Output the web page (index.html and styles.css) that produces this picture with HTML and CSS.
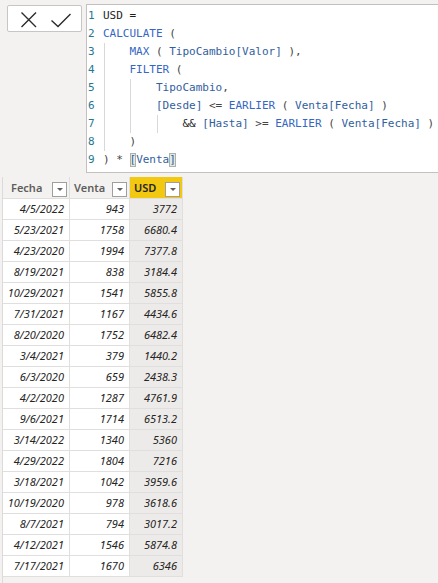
FILE: index.html
```html
<!DOCTYPE html>
<html lang="es">
<head>
<meta charset="utf-8">
<title>USD</title>
<link rel="stylesheet" href="styles.css">
</head>
<body>
<div class="top">
  <div class="actions">
    <svg class="icon" width="20" height="20" viewBox="0 0 20 20"><path d="M3.5 3.5 L18 18 M18 3.5 L3.5 18" stroke="#2b2b2b" stroke-width="1.4" fill="none"/></svg>
    <svg class="icon" width="22" height="20" viewBox="0 0 22 20"><path d="M1.5 11.5 L8 17.5 L20.5 5" stroke="#2b2b2b" stroke-width="1.4" fill="none"/></svg>
  </div>
  <div class="editor">
    <div class="line"><span class="ln">1</span><span class="tx">USD =</span></div>
    <div class="line"><span class="ln">2</span><span class="kw">CALCULATE</span><span class="op"> (</span></div>
    <div class="line"><span class="ln">3</span><span class="ind"></span><span class="kw">MAX</span><span class="op"> ( </span><span class="ref">TipoCambio[Valor]</span><span class="op"> ),</span></div>
    <div class="line"><span class="ln">4</span><span class="ind"></span><span class="kw">FILTER</span><span class="op"> (</span></div>
    <div class="line"><span class="ln">5</span><span class="ind"></span><span class="ind"></span><span class="ref">TipoCambio</span><span class="op">,</span></div>
    <div class="line"><span class="ln">6</span><span class="ind"></span><span class="ind"></span><span class="ref">[Desde]</span><span class="op"> &lt;= </span><span class="kw">EARLIER</span><span class="op"> ( </span><span class="ref">Venta[Fecha]</span><span class="op"> )</span></div>
    <div class="line"><span class="ln">7</span><span class="ind"></span><span class="ind"></span><span class="ind"></span><span class="tx">&amp;&amp; </span><span class="ref">[Hasta]</span><span class="op"> &gt;= </span><span class="kw">EARLIER</span><span class="op"> ( </span><span class="ref">Venta[Fecha]</span><span class="op"> )</span></div>
    <div class="line"><span class="ln">8</span><span class="ind"></span><span class="op">)</span></div>
    <div class="line"><span class="ln">9</span><span class="op">) * </span><span class="ref match">[</span><span class="ref">Venta</span><span class="ref match">]</span></div>
  </div>
</div>
<div class="panel">
  <div class="grid">
    <div class="hd c1"><span>Fecha</span><span class="dd"></span></div>
    <div class="hd c2"><span>Venta</span><span class="dd"></span></div>
    <div class="hd c3 sel"><span>USD</span><span class="dd"></span></div>

    <div class="cell">4/5/2022</div><div class="cell">943</div><div class="cell usd">3772</div>
    <div class="cell">5/23/2021</div><div class="cell">1758</div><div class="cell usd">6680.4</div>
    <div class="cell">4/23/2020</div><div class="cell">1994</div><div class="cell usd">7377.8</div>
    <div class="cell">8/19/2021</div><div class="cell">838</div><div class="cell usd">3184.4</div>
    <div class="cell">10/29/2021</div><div class="cell">1541</div><div class="cell usd">5855.8</div>
    <div class="cell">7/31/2021</div><div class="cell">1167</div><div class="cell usd">4434.6</div>
    <div class="cell">8/20/2020</div><div class="cell">1752</div><div class="cell usd">6482.4</div>
    <div class="cell">3/4/2021</div><div class="cell">379</div><div class="cell usd">1440.2</div>
    <div class="cell">6/3/2020</div><div class="cell">659</div><div class="cell usd">2438.3</div>
    <div class="cell">4/2/2020</div><div class="cell">1287</div><div class="cell usd">4761.9</div>
    <div class="cell">9/6/2021</div><div class="cell">1714</div><div class="cell usd">6513.2</div>
    <div class="cell">3/14/2022</div><div class="cell">1340</div><div class="cell usd">5360</div>
    <div class="cell">4/29/2022</div><div class="cell">1804</div><div class="cell usd">7216</div>
    <div class="cell">3/18/2021</div><div class="cell">1042</div><div class="cell usd">3959.6</div>
    <div class="cell">10/19/2020</div><div class="cell">978</div><div class="cell usd">3618.6</div>
    <div class="cell">8/7/2021</div><div class="cell">794</div><div class="cell usd">3017.2</div>
    <div class="cell">4/12/2021</div><div class="cell">1546</div><div class="cell usd">5874.8</div>
    <div class="cell">7/17/2021</div><div class="cell">1670</div><div class="cell usd">6346</div>
  </div>
</div>
</body>
</html>
```
FILE: styles.css
```css
html, body {
  margin: 0;
  padding: 0;
  background: #f3f2f1;
  width: 438px;
  height: 583px;
  overflow: hidden;
}
.top {
  display: flex;
  align-items: flex-start;
  padding-top: 4px;
}
.actions {
  margin-left: 7px;
  margin-top: 1px;
  width: 75px;
  height: 27px;
  box-sizing: border-box;
  background: #fff;
  border: 1px solid #c8c6c4;
  border-radius: 2px;
  display: flex;
  align-items: center;
  padding-left: 10px;
  gap: 12px;
}
.icon { display: block; flex: none; }
.editor {
  margin-left: 4px;
  flex: 1;
  height: 169px;
  box-sizing: border-box;
  background: #fff;
  border: 1px solid #c3c1bf;
  border-right: none;
  padding-top: 2px;
  font-family: "DejaVu Sans Mono", "Liberation Mono", monospace;
  font-size: 11px;
}
.line {
  height: 18px;
  line-height: 18px;
  display: flex;
  align-items: stretch;
  white-space: pre;
}
.ln {
  width: 16px;
  padding-left: 1px;
  box-sizing: border-box;
  color: #237893;
  flex: none;
}
.ind {
  width: 4ch;
  flex: none;
  background: linear-gradient(#d8d8d8, #d8d8d8) no-repeat 1px 0 / 1px 100%;
}
.tx { color: #1e1e1e; }
.op { color: #444; }
.kw { color: #3467c3; }
.ref { color: #31609e; }
.match {
  background: #e3e8e3;
  box-shadow: inset 0 0 0 1px #aab2aa;
  margin: 2px 0;
  line-height: 14px;
}
.panel {
  margin-top: 4px;
  margin-left: 2px;
  border-left: 1px solid #dddbd9;
  height: 410px;
}
.grid {
  display: grid;
  grid-template-columns: 67px 60px 53px;
  grid-auto-rows: 21px;
  grid-template-rows: 22px;
  font-family: "Noto Sans", "Open Sans", sans-serif;
  font-size: 11px;
}
.hd, .cell {
  box-sizing: border-box;
  border-right: 1px solid #e1dfdd;
  border-bottom: 1px solid #e1dfdd;
}
.hd {
  display: flex;
  align-items: center;
  justify-content: space-between;
  font-weight: 600;
  color: #605e5c;
  font-size: 11px;
  padding-right: 2px;
}
.c1 { padding-left: 8px; }
.c2, .c3 { padding-left: 4px; }
.sel { background: #f2c811; color: #252423; }
.dd {
  width: 15px;
  height: 15px;
  box-sizing: border-box;
  border: 1px solid #a19f9d;
  background: #fff;
  margin-top: 3px;
  position: relative;
}
.dd::after {
  content: "";
  position: absolute;
  left: 4px;
  top: 5px;
  border-left: 3px solid transparent;
  border-right: 3px solid transparent;
  border-top: 3px solid #605e5c;
}
.cell {
  background: #fff;
  color: #252423;
  font-style: italic;
  text-align: right;
  padding-right: 5px;
  line-height: 20px;
}
.cell.usd { background: #edebe9; }
```
